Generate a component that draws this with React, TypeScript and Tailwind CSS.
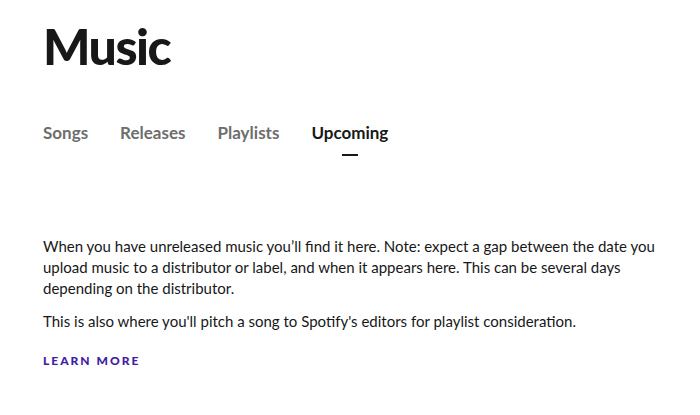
export default function App() {
  const tabs = ["Songs", "Releases", "Playlists", "Upcoming"]
  return (
    <div className="min-h-screen bg-white px-[43px] pt-[16px] font-['Lato',sans-serif] text-[#181818]">
      <h1 className="text-[50px] font-black leading-[60px] tracking-[-1.5px]">Music</h1>

      <nav className="mt-[46px] flex gap-8">
        {tabs.map((t) => {
          const active = t === "Upcoming"
          return (
            <div key={t} className="flex flex-col items-center">
              <span
                className={
                  active
                    ? "text-[17px] font-bold leading-[22px] text-[#181818]"
                    : "text-[17px] font-bold leading-[22px] text-[#6e6e6e]"
                }
              >
                {t}
              </span>
              <span className={active ? "mt-[10px] h-[2px] w-4 bg-[#181818]" : "mt-[10px] h-[2px] w-4"} />
            </div>
          )
        })}
      </nav>

      <div className="mt-[80px] w-[625px] text-[15px] leading-[21px]">
        <p>
          When you have unreleased music you’ll find it here. Note: expect a gap between the date you upload
          music to a distributor or label, and when it appears here. This can be several days depending on the
          distributor.
        </p>
        <p className="mt-[12px]">
          This is also where you'll pitch a song to Spotify's editors for playlist consideration.
        </p>
        <a href="#" className="mt-[21px] inline-block text-[12px] font-black leading-[16px] tracking-[2px] text-[#3f1ca6]">
          LEARN MORE
        </a>
      </div>
    </div>
  )
}
